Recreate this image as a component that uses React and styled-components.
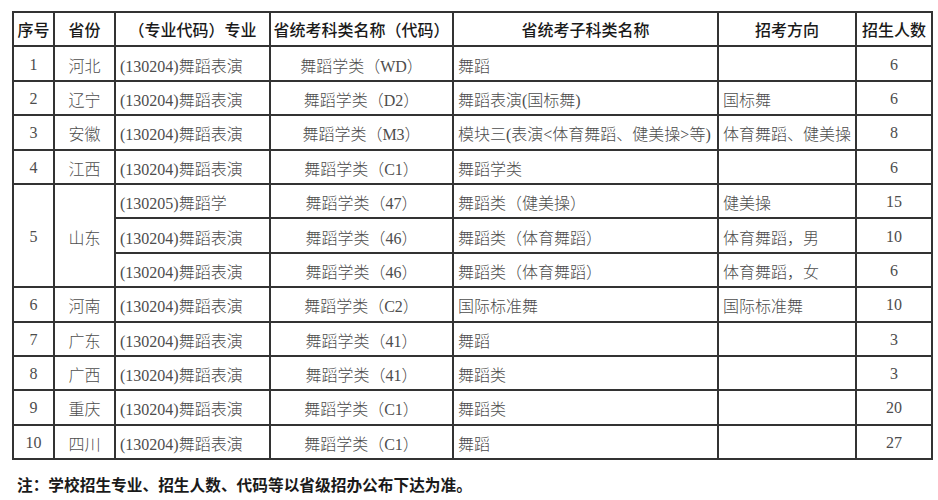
import { styled, createGlobalStyle } from "styled-components";

const GlobalStyle = createGlobalStyle`
    html, body {
        margin: 0;
        padding: 0;
        background: #ffffff;
    }
`;

const rows = [
    { no: "1", prov: "河北", items: [["(130204)舞蹈表演", "舞蹈学类（WD）", "舞蹈", "", "6"]] },
    { no: "2", prov: "辽宁", items: [["(130204)舞蹈表演", "舞蹈学类（D2）", "舞蹈表演(国标舞)", "国标舞", "6"]] },
    { no: "3", prov: "安徽", items: [["(130204)舞蹈表演", "舞蹈学类（M3）", "模块三(表演<体育舞蹈、健美操>等)", "体育舞蹈、健美操", "8"]] },
    { no: "4", prov: "江西", items: [["(130204)舞蹈表演", "舞蹈学类（C1）", "舞蹈学类", "", "6"]] },
    {
        no: "5",
        prov: "山东",
        items: [
            ["(130205)舞蹈学", "舞蹈学类（47）", "舞蹈类（健美操）", "健美操", "15"],
            ["(130204)舞蹈表演", "舞蹈学类（46）", "舞蹈类（体育舞蹈）", "体育舞蹈，男", "10"],
            ["(130204)舞蹈表演", "舞蹈学类（46）", "舞蹈类（体育舞蹈）", "体育舞蹈，女", "6"],
        ],
    },
    { no: "6", prov: "河南", items: [["(130204)舞蹈表演", "舞蹈学类（C2）", "国际标准舞", "国际标准舞", "10"]] },
    { no: "7", prov: "广东", items: [["(130204)舞蹈表演", "舞蹈学类（41）", "舞蹈", "", "3"]] },
    { no: "8", prov: "广西", items: [["(130204)舞蹈表演", "舞蹈学类（41）", "舞蹈类", "", "3"]] },
    { no: "9", prov: "重庆", items: [["(130204)舞蹈表演", "舞蹈学类（C1）", "舞蹈类", "", "20"]] },
    { no: "10", prov: "四川", items: [["(130204)舞蹈表演", "舞蹈学类（C1）", "舞蹈", "", "27"]] },
];

const widths = [41, 61, 155, 183, 265, 138, 76];

export default function App() {
    return (
        <Page>
            <GlobalStyle />
            <Table>
                <colgroup>
                    {widths.map((w, i) => (
                        <col key={i} style={{ width: w }} />
                    ))}
                </colgroup>
                <thead>
                    <Row>
                        <Head>序号</Head>
                        <Head>省份</Head>
                        <Head>（专业代码）专业</Head>
                        <Head>省统考科类名称（代码）</Head>
                        <Head>省统考子科类名称</Head>
                        <Head>招考方向</Head>
                        <Head>招生人数</Head>
                    </Row>
                </thead>
                <tbody>
                    {rows.map((r) =>
                        r.items.map((it, idx) => (
                            <Row key={r.no + "-" + idx}>
                                {idx === 0 && (
                                    <Cell $center rowSpan={r.items.length}>{r.no}</Cell>
                                )}
                                {idx === 0 && (
                                    <Cell $center rowSpan={r.items.length}>{r.prov}</Cell>
                                )}
                                <Cell>{it[0]}</Cell>
                                <Cell $center>{it[1]}</Cell>
                                <Cell>{it[2]}</Cell>
                                <Cell>{it[3]}</Cell>
                                <Cell $center>{it[4]}</Cell>
                            </Row>
                        ))
                    )}
                </tbody>
            </Table>
            <Note>注：学校招生专业、招生人数、代码等以省级招办公布下达为准。</Note>
        </Page>
    );
}

const Page = styled.div`
    padding: 11px 0 0 12px;
    width: 938px;
    box-sizing: border-box;
`;

const Table = styled.table`
    border-collapse: collapse;
    table-layout: fixed;
    width: 917px;
    border: 2px solid #333;
`;

const Row = styled.tr`
    height: 34.4px;
`;

const Head = styled.th`
    border: 2px solid #333;
    padding: 0;
    font-family: "Noto Sans CJK SC", sans-serif;
    font-weight: 500;
    font-size: 16px;
    color: #1a1a1a;
    text-align: center;
    white-space: nowrap;
    overflow: hidden;
`;

const Cell = styled.td`
    border: 2px solid #333;
    padding: 2px 0 0 4px;
    font-family: "Liberation Serif", "Noto Sans CJK SC", serif;
    font-weight: 300;
    font-size: 16px;
    color: #4d4d4d;
    text-align: ${(p) => (p.$center ? "center" : "left")};
    padding-left: ${(p) => (p.$center ? "0" : "4px")};
    white-space: nowrap;
    overflow: hidden;
`;

const Note = styled.div`
    margin-top: 13px;
    padding-left: 5px;
    font-family: "Noto Sans CJK SC", sans-serif;
    font-weight: 700;
    font-size: 15.7px;
    line-height: 24px;
    color: #1a1a1a;
`;
